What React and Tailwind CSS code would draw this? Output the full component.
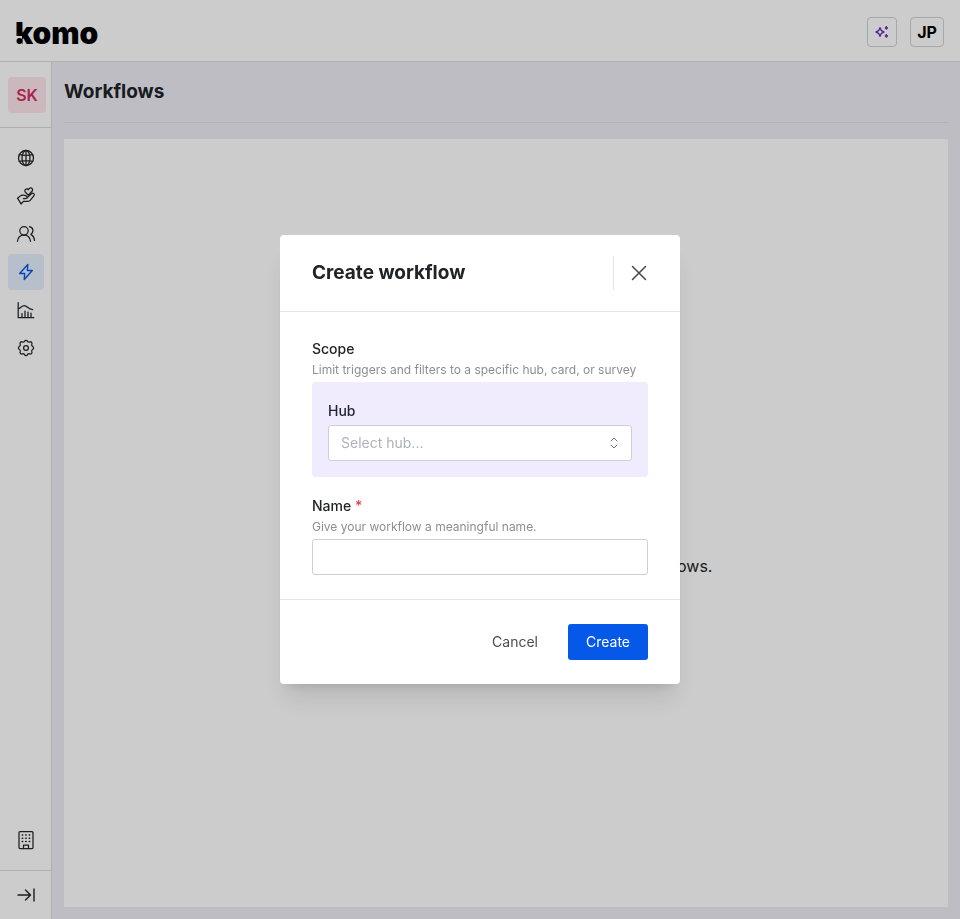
import { useState } from "react";

const iconProps = {
  width: 20,
  height: 20,
  viewBox: "0 0 20 20",
  fill: "none",
  stroke: "currentColor",
  strokeWidth: 1.25,
  strokeLinecap: "round",
  strokeLinejoin: "round",
  "aria-hidden": true,
};

function GlobeIcon() {
  return (
    <svg {...iconProps} strokeWidth={1.3}>
      <circle cx="10" cy="10" r="7.5" />
      <ellipse cx="10" cy="10" rx="4" ry="7.5" />
      <path d="M10 2.5v15M3.3 6.7q6.7 1.4 13.4 0M3.3 13.3q6.7-1.4 13.4 0" />
    </svg>
  );
}

function HandHeartIcon() {
  return (
    <svg {...iconProps}>
      <path d="M12.3 9.2 9.4 6.300c-1-1.100-.6-2.700.7-3.200.9-.3 1.800 0 2.300.7.200-1.100 1-1.800 2.100-1.900 1.600-.1 2.500 1.500 1.900 2.900z" />
      <path d="m1.600 12.300 2.700-2.400c1.100-.9 2.200-1.100 3.500-.7l2.300.6c1.500.4 1.400 2.600-.2 2.700H7.400" />
      <path d="m11 11.900 4.400-4.200c1.600-1.300 3.600 0 2.600 1.900l-3.600 4.500c-.7.800-1.400 1.200-2.400 1.200H7.700l-2.600 2.500" />
      <path d="m1.600 12.300 3.500 5.500" />
    </svg>
  );
}

function UsersIcon() {
  return (
    <svg {...iconProps}>
      <circle cx="8" cy="6.800" r="4.200" />
      <path d="M1.500 17.300c.3-3.800 2.900-6.300 6.500-6.300s6.200 2.500 6.500 6.300" />
      <path d="M13.500 2.600c3.800.7 4.700 5.300 1.300 7.800 2.200 1.100 3.400 3.200 3.700 6.100" />
    </svg>
  );
}

function BoltIcon() {
  return (
    <svg {...iconProps} strokeWidth={1.4}>
      <path d="M11.800 2.500 3.700 11.500h5L8.200 17.500l8.100-9h-5z" />
    </svg>
  );
}

function ChartIcon() {
  return (
    <svg {...iconProps}>
      <path d="M2.200 2.500v15h15.600" />
      <path d="M2.500 8.500c2.300 0 3.200-3 5.700-3 3.300 0 3.700 4 8.500 4" />
      <path d="M6 17v-3.500M9 17v-6M12 17v-5M15 17v-4" />
    </svg>
  );
}

function GearIcon() {
  return (
    <svg {...iconProps}>
      <circle cx="10" cy="10" r="2.400" />
      <path d="M8.500 3.200a1.700 1.700 0 0 1 3 0c.4.8 1.200 1.100 2 .8a1.700 1.700 0 0 1 2.300 2.300c-.3.800 0 1.700.8 2a1.800 1.800 0 0 1 0 3.200c-.8.400-1.100 1.200-.8 2a1.700 1.700 0 0 1-2.300 2.300c-.8-.3-1.600 0-2 .8a1.700 1.700 0 0 1-3 0c-.4-.8-1.200-1.100-2-.8a1.700 1.700 0 0 1-2.300-2.300c.3-.8 0-1.600-.8-2a1.800 1.800 0 0 1 0-3.200c.8-.3 1.100-1.200.8-2A1.700 1.700 0 0 1 6.500 4c.8.300 1.600 0 2-.8z" />
    </svg>
  );
}

function BuildingIcon() {
  return (
    <svg {...iconProps}>
      <rect x="3" y="1.500" width="14" height="17" rx="1" />
      <path d="M7.500 18.500V15h5v3.500" />
      <path strokeDasharray="0.500 3" strokeWidth="1.500" d="M6.200 5h8M6.200 8.200h8M6.200 11.400h8" />
    </svg>
  );
}

function CollapseIcon() {
  return (
    <svg {...iconProps} strokeWidth={1.4}>
      <path d="M2 10h12M9.500 5l5 5-5 5M18 4v12" />
    </svg>
  );
}

function SparklesIcon() {
  return (
    <svg {...iconProps} width={16} height={16}>
      <path d="M7.500 4.500c.7 3.300 1.800 4.600 5 5.500-3.200.9-4.300 2.200-5 5.500-.7-3.300-1.800-4.600-5-5.500 3.200-.9 4.300-2.200 5-5.500z" strokeWidth="1.700" />
      <path d="m15.500 3 .6 1.400 1.400.6-1.400.6-.6 1.400-.6-1.400-1.400-.6 1.400-.6zM15.500 13l.6 1.400 1.400.6-1.400.6-.6 1.400-.6-1.400-1.400-.6 1.400-.6z" fill="currentColor" />
    </svg>
  );
}

function Logo() {
  return (
    <svg className="block" width="92" height="46" viewBox="0 0 92 46" aria-label="komo" role="img">
      <text x="-1" y="35" fontSize="30" fontWeight="900" fontFamily="Inter, sans-serif">komo</text>
      {/* the stem of the k ends in the dot of an exclamation mark */}
      <rect x="0" y="27" width="6" height="9" fill="#fff" />
      <circle cx="3.500" cy="32" r="3" />
    </svg>
  );
}

const navItems = [
  { label: "Hubs", icon: GlobeIcon },
  { label: "Engagement", icon: HandHeartIcon },
  { label: "Contacts", icon: UsersIcon },
  { label: "Workflows", icon: BoltIcon, active: true },
  { label: "Analytics", icon: ChartIcon },
  { label: "Settings", icon: GearIcon },
];

function Header() {
  return (
    <header className="flex h-[62px] shrink-0 items-center justify-between border-b border-[#dcdcdf] bg-white px-4 pt-0.5">
      <a href="#home" aria-label="komo">
        <Logo />
      </a>
      <div className="flex items-center gap-[13px]">
        <button type="button" aria-label="Assistant" className="flex h-[30px] w-[30px] items-center justify-center rounded border border-[#d2d2d6] text-[#6a35c8]">
          <SparklesIcon />
        </button>
        <button type="button" className="flex h-[30px] w-[34px] items-center justify-center rounded border border-[#d2d2d6] text-base font-bold text-black">
          JP
        </button>
      </div>
    </header>
  );
}

function Sidebar() {
  return (
    <aside className="flex w-[52px] shrink-0 flex-col border-r border-[#dcdcdf] bg-white">
      <div className="border-b border-[#dcdcdf] px-2 pt-[15px] pb-3.5">
        <button type="button" className="flex h-9 w-[38px] items-center justify-center rounded bg-[#fde6ed] text-base font-semibold text-[#d42d68]">
          SK
        </button>
      </div>
      <nav className="flex flex-1 flex-col gap-0.5 px-2 pt-3">
        {navItems.map(({ label, icon: Icon, active }) => (
          <a
            key={label}
            href={`#${label.toLowerCase()}`}
            aria-label={label}
            className={`flex h-9 w-9 items-center justify-center rounded ${active ? "bg-[#e5effd] text-[#0b57e3]" : "text-[#242629]"}`}
          >
            <Icon />
          </a>
        ))}
      </nav>
      <a href="#organisation" aria-label="Organisation" className="mx-2 mb-3 flex h-9 w-9 items-center justify-center text-[#242629]">
        <BuildingIcon />
      </a>
      <button type="button" aria-label="Expand sidebar" className="flex h-[49px] items-center justify-center border-t border-[#dcdcdf] text-[#242629]">
        <CollapseIcon />
      </button>
    </aside>
  );
}

function CreateWorkflowDialog({ onClose }) {
  const [name, setName] = useState("");

  return (
    <div className="fixed inset-0 z-10 flex items-center justify-center bg-black/20">
      <form
        role="dialog"
        aria-modal="true"
        aria-labelledby="dialog-title"
        onSubmit={(e) => e.preventDefault()}
        className="w-full max-w-[400px] rounded bg-white shadow-xl"
      >
        <div className="flex h-[77px] items-center justify-between border-b border-[#e3e4e6] pr-6 pl-8">
          <h2 id="dialog-title" className="text-[19px] leading-7 font-bold text-[#202427]">Create workflow</h2>
          <div className="border-l border-[#e3e4e6] pl-2">
            <button type="button" aria-label="Close" onClick={onClose} className="flex h-[34px] w-[34px] items-center justify-center text-[#44474a]">
              <svg width="16" height="16" viewBox="0 0 16 16" fill="none" stroke="currentColor" strokeWidth="1.500" strokeLinecap="round" aria-hidden="true">
                <path d="m1.500 1.500 13 13M14.500 1.500l-13 13" />
              </svg>
            </button>
          </div>
        </div>

        <div className="px-8 pt-[27px] pb-6">
          <h3 className="text-sm font-medium text-[#202427]">Scope</h3>
          <p className="mt-px text-xs leading-5 text-[#8a8f94]">Limit triggers and filters to a specific hub, card, or survey</p>
          <div className="mt-0.5 rounded bg-[#f0ebfd] px-4 pt-[19px] pb-4">
            <label htmlFor="hub" className="block text-sm font-medium text-[#202437]">Hub</label>
            <div className="relative mt-1">
              <select id="hub" defaultValue="" className="block h-9 w-full appearance-none rounded-[3px] border border-[#cdced8] bg-white px-3 text-sm text-[#adb2b9]">
                <option value="">Select hub...</option>
              </select>
              <svg className="pointer-events-none absolute top-2.5 right-2.5" width="16" height="16" viewBox="0 0 16 16" fill="none" stroke="#6f7479" strokeLinecap="round" strokeLinejoin="round" aria-hidden="true">
                <path d="m5 6 3-3 3 3M5 10l3 3 3-3" />
              </svg>
            </div>
          </div>

          <label htmlFor="name" className="mt-[19px] block text-sm font-medium text-[#202427]">
            Name <span className="text-[#e8414b]">*</span>
          </label>
          <p id="name-hint" className="mt-px text-xs leading-5 text-[#8a8f94]">Give your workflow a meaningful name.</p>
          <input
            id="name"
            type="text"
            required
            aria-describedby="name-hint"
            value={name}
            onChange={(e) => setName(e.target.value)}
            className="mt-0.5 block h-9 w-full rounded-[3px] border border-[#cdd0d3] px-3 text-sm outline-none"
          />
        </div>

        <div className="flex justify-end gap-3 border-t border-[#e3e4e6] px-8 py-6">
          <button type="button" onClick={onClose} className="h-9 rounded px-[18px] text-sm text-[#4a4e52]">Cancel</button>
          <button type="submit" className="h-9 rounded-[3px] bg-[#0558e8] px-[18px] text-sm text-white">Create</button>
        </div>
      </form>
    </div>
  );
}

export default function App() {
  const [open, setOpen] = useState(true);

  return (
    <div className="flex h-screen flex-col bg-[#efedf6] font-['Inter',sans-serif] text-[#202427]">
      <Header />
      <div className="flex min-h-0 flex-1">
        <Sidebar />
        <main className="flex min-w-0 flex-1 flex-col p-3 pt-4">
          <h1 className="border-b border-[#dfdee8] pb-4 text-[19px] leading-7 font-bold">Workflows</h1>
          <section className="mt-4 flex flex-1 items-center justify-center bg-white pt-[86px]">
            <p className="text-base">You haven't created any of your automated workflows.</p>
          </section>
        </main>
      </div>
      {open && <CreateWorkflowDialog onClose={() => setOpen(false)} />}
    </div>
  );
}
